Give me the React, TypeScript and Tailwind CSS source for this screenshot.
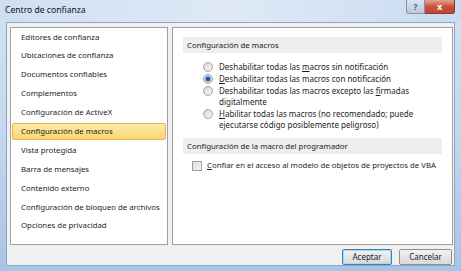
import React from "react";

const font = { fontFamily: '"Noto Sans", "Open Sans", sans-serif' };

function Radio({ checked }: { checked?: boolean }) {
  return (
    <span className="relative mt-[0.5px] flex h-[10px] w-[10px] shrink-0 items-center justify-center rounded-full border border-[#a2a2a2] bg-gradient-to-br from-[#d6d6d6] to-[#f6f6f6]">
      {checked && <span className="h-[4px] w-[4px] rounded-full bg-[#1e4e9c] shadow-[0_0_1px_1px_#6b9ad8]" />}
    </span>
  );
}

function U({ children }: { children: React.ReactNode }) {
  return <span className="underline underline-offset-[1px]">{children}</span>;
}

export default function App() {
  const items = [
    "Editores de confianza",
    "Ubicaciones de confianza",
    "Documentos confiables",
    "Complementos",
    "Configuración de ActiveX",
    "Configuración de macros",
    "Vista protegida",
    "Barra de mensajes",
    "Contenido externo",
    "Configuración de bloqueo de archivos",
    "Opciones de privacidad",
  ];
  return (
    <div
      className="flex h-[271px] w-[461px] flex-col overflow-hidden bg-gradient-to-b from-[#d3e2f3] via-[#c4d7ee] to-[#a9c4e4] text-[#1e1e1e]"
      style={font}
    >
      {/* title bar */}
      <div className="flex h-[22px] shrink-0 items-start justify-between bg-gradient-to-r from-[#cfdff2] via-[#dfe9f6] to-[#c9dbf0]">
        <div className="pl-[5px] pt-[4px] text-[8.6px] leading-[13px] text-[#111]">Centro de confianza</div>
        <div className="mr-[6px] flex">
          <div className="flex h-[14px] w-[19px] items-center justify-center rounded-bl-[3px] border border-t-0 border-[#7f93ad] bg-gradient-to-b from-[#dbe5f1] to-[#b9c8db] text-[8px] font-bold leading-none text-[#4b5a6c]">
            ?
          </div>
          <div className="flex h-[14px] w-[30px] items-center justify-center rounded-br-[3px] border border-l-0 border-t-0 border-[#8a3a30] bg-gradient-to-b from-[#e3a38f] via-[#c9513f] to-[#c2432f] text-[9px] font-bold leading-none text-white">
            x
          </div>
        </div>
      </div>
      {/* client area */}
      <div className="mx-[6px] mb-[5px] flex flex-1 flex-col border border-[#8ea6c4] bg-[#f0f0f0] pl-[3px] pr-[1px] pt-[4px] text-[7.8px]">
        <div className="flex h-[218px] gap-[4px]">
          {/* left nav */}
          <div className="flex w-[158px] shrink-0 flex-col border border-[#a0a0a0] bg-white px-[1px]">
            {items.map((t) => {
              const sel = t === "Configuración de macros";
              return (
                <div key={t} className="flex h-[18.9px] shrink-0 items-center">
                  <div
                    className={
                      "flex h-[17px] w-full items-center whitespace-nowrap pl-[8px] leading-none " +
                      (sel
                        ? "rounded-[2px] border border-[#e3b64c] bg-gradient-to-b from-[#fdeaa6] to-[#fbd774]"
                        : "border border-transparent")
                    }
                  >
                    {t}
                  </div>
                </div>
              );
            })}
          </div>
          {/* right pane */}
          <div className="flex w-[281px] min-w-0 shrink-0 flex-col border border-[#a0a0a0] bg-white px-[10px] pt-[9px] leading-[11px]">
            <div className="flex h-[16px] items-center bg-[#eeeeee] pl-[4px] text-[#222]">Configuración de macros</div>
            <div className="mt-[8px] flex flex-col gap-[1px] pl-[20px] text-[8px]">
              <div className="flex gap-[6px]">
                <Radio />
                <span className="w-[205px]">
                  Deshabilitar todas las <U>m</U>acros sin notificación
                </span>
              </div>
              <div className="flex gap-[6px]">
                <Radio checked />
                <span className="w-[205px]">
                  <U>D</U>eshabilitar todas las macros con notificación
                </span>
              </div>
              <div className="flex gap-[6px]">
                <Radio />
                <span className="w-[205px]">
                  Deshabilitar todas las macros excepto las <U>f</U>irmadas digitalmente
                </span>
              </div>
              <div className="flex gap-[6px]">
                <Radio />
                <span className="w-[205px]">
                  <U>H</U>abilitar todas las macros (no recomendado; puede ejecutarse código posiblemente peligroso)
                </span>
              </div>
            </div>
            <div className="mt-[8px] flex h-[16px] items-center bg-[#eeeeee] pl-[4px] text-[#222]">
              Configuración de la macro del programador
            </div>
            <div className="mt-[6px] flex items-center gap-[5px] whitespace-nowrap pl-[9px]">
              <span className="h-[10px] w-[10px] shrink-0 border border-[#a2a2a2] bg-gradient-to-br from-[#dadada] to-[#f7f7f7]" />
              <span>
                <U>C</U>onfiar en el acceso al modelo de objetos de proyectos de VBA
              </span>
            </div>
          </div>
        </div>
        {/* buttons */}
        <div className="mt-[4px] flex justify-end gap-[7px] pr-[1px] text-[8px]">
          <button className="flex h-[16px] w-[50px] items-center justify-center rounded-[2px] border border-[#3c7fb1] bg-gradient-to-b from-[#f2f2f2] to-[#d9d9d9] leading-none shadow-[inset_0_0_0_1px_#a9d7f5]">
            Aceptar
          </button>
          <button className="flex h-[16px] w-[53px] items-center justify-center rounded-[2px] border border-[#8e8f8f] bg-gradient-to-b from-[#f2f2f2] to-[#d9d9d9] leading-none">
            Cancelar
          </button>
        </div>
      </div>
    </div>
  );
}
